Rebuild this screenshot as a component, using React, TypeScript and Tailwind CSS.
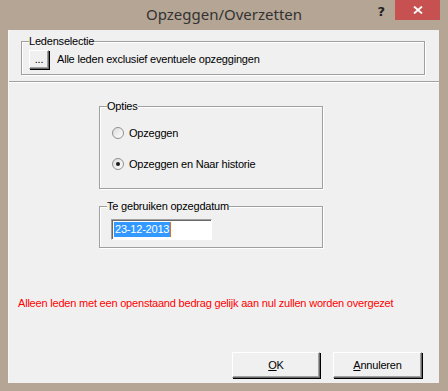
import React from "react";

function Group({ label, className, children }: { label: string; className: string; children: React.ReactNode }) {
  return (
    <div className={`relative border border-[#a0a0a0] shadow-[1px_1px_0_#ffffff,inset_1px_1px_0_#ffffff] ${className}`}>
      <span className="absolute -top-[8px] left-[7px] bg-[#f0f0f0] leading-[14px]">{label}</span>
      {children}
    </div>
  );
}

function Radio({ checked, label }: { checked?: boolean; label: string }) {
  return (
    <div className="flex items-center gap-[5px]">
      <span className="flex h-[12px] w-[12px] items-center justify-center rounded-full border border-[#8f8f8f] bg-gradient-to-br from-[#dcdcdc] to-[#ffffff]">
        {checked && <span className="h-[4px] w-[4px] rounded-full bg-[#1a1a1a]" />}
      </span>
      <span>{label}</span>
    </div>
  );
}

function Button({ children, className }: { children: React.ReactNode; className: string }) {
  return (
    <div
      className={`flex items-center justify-center border border-t-white border-l-white border-r-[#696969] border-b-[#696969] bg-[#f0f0f0] shadow-[1px_1px_0_#000000,inset_-1px_-1px_0_#a0a0a0] ${className}`}
    >
      {children}
    </div>
  );
}

export default function App() {
  return (
    <div
      className="flex h-[391px] w-[448px] flex-col bg-[#b5a595] text-[11px] tracking-[-0.2px] text-black"
      style={{ fontFamily: '"Liberation Sans", Arial, sans-serif' }}
    >
      {/* title bar */}
      <div className="grid h-[30px] shrink-0 grid-cols-[1fr_auto_1fr] items-start tracking-normal">
        <div />
        <div className="pt-[4px] text-[15px] leading-[20px] text-[#333333]" style={{ fontFamily: '"Noto Sans", sans-serif' }}>
          Opzeggen/Overzetten
        </div>
        <div className="flex justify-end">
          <span className="mr-[10px] mt-[4px] text-[13px] font-bold leading-[16px] text-[#222222]" style={{ fontFamily: '"DejaVu Sans", sans-serif' }}>
            ?
          </span>
          <div className="mr-[8px] flex h-[20px] w-[45px] items-center justify-center bg-[#c75050]">
            <svg width="10" height="8" viewBox="0 0 10 8">
              <path d="M1 0.5 L9 7.5 M9 0.5 L1 7.5" stroke="#ffffff" strokeWidth="1.8" />
            </svg>
          </div>
        </div>
      </div>

      {/* client area */}
      <div className="ml-[8px] flex h-[353px] w-[431px] flex-col border-l border-[#f7f7f7] bg-[#f0f0f0]">
        {/* top panel */}
        <div className="h-[52px] shrink-0 border-b border-[#a0a0a0] pl-[12px] pr-[14px] pt-[11px]">
          <Group label="Ledenselectie" className="h-[34px]">
            <div className="flex items-center gap-[8px] pl-[7px] pt-[8px]">
              <Button className="h-[19px] w-[20px] leading-none">...</Button>
              <span>Alle leden exclusief eventuele opzeggingen</span>
            </div>
          </Group>
        </div>
        <div className="h-px shrink-0 bg-white" />

        {/* middle */}
        <div className="flex flex-col pl-[90px] pt-[23px]">
          <Group label="Opties" className="h-[83px] w-[224px]">
            <div className="flex flex-col gap-[14px] pl-[12px] pt-[18px]">
              <Radio label="Opzeggen" />
              <Radio checked label="Opzeggen en Naar historie" />
            </div>
          </Group>
          <Group label="Te gebruiken opzegdatum" className="mt-[17px] h-[42px] w-[224px]">
            <div className="pl-[11px] pt-[12px]">
              <div className="flex h-[21px] w-[101px] items-center border border-t-[#a0a0a0] border-l-[#a0a0a0] border-r-white border-b-white bg-white pl-[2px] shadow-[inset_1px_1px_0_#696969]">
                <span className="flex h-[15px] items-center bg-[#3399ff] px-[1px] text-white">23-12-2013</span>
                <span className="h-[15px] w-px bg-[#e07020]" />
              </div>
            </div>
          </Group>
        </div>

        <div className="pl-[9px] pt-[47px] text-[#ff0000]">
          Alleen leden met een openstaand bedrag gelijk aan nul zullen worden overgezet
        </div>

        <div className="mt-auto flex justify-end gap-[13px] pb-[5px] pr-[17px]">
          <Button className="h-[26px] w-[88px]">
            <span>
              <span className="underline">O</span>K
            </span>
          </Button>
          <Button className="h-[26px] w-[89px]">
            <span>
              <span className="underline">A</span>nnuleren
            </span>
          </Button>
        </div>
      </div>
    </div>
  );
}
